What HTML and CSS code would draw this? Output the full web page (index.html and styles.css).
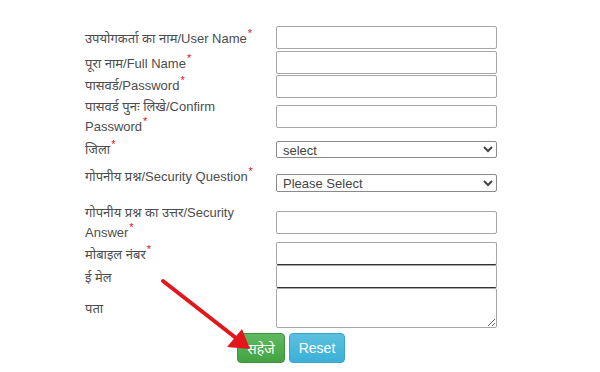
FILE: index.html
```html
<!DOCTYPE html>
<html>
<head>
<meta charset="utf-8">
<link rel="stylesheet" href="styles.css">
</head>
<body>
<div class="page">
  <form class="form">
    <div class="row r1">
      <label class="lbl">उपयोगकर्ता का नाम/User Name<span class="req">*</span></label>
      <input class="txt" type="text">
    </div>
    <div class="row r1">
      <label class="lbl">पूरा नाम/Full Name<span class="req">*</span></label>
      <input class="txt" type="text">
    </div>
    <div class="row r3">
      <label class="lbl">पासवर्ड/Password<span class="req">*</span></label>
      <input class="txt" type="password">
    </div>
    <div class="row r4">
      <label class="lbl">पासवर्ड पुनः लिखे/Confirm Password<span class="req">*</span></label>
      <input class="txt" type="password">
    </div>
    <div class="row r5">
      <label class="lbl">जिला<span class="req">*</span></label>
      <select class="sel"><option>select</option></select>
    </div>
    <div class="row r6">
      <label class="lbl top">गोपनीय प्रश्न/Security Question<span class="req">*</span></label>
      <select class="sel sel2"><option>Please Select</option></select>
    </div>
    <div class="row r7">
      <label class="lbl">गोपनीय प्रश्न का उत्तर/Security Answer<span class="req">*</span></label>
      <input class="txt" type="text">
    </div>
    <div class="row r8">
      <label class="lbl">मोबाइल नंबर<span class="req">*</span></label>
      <input class="txt dark" type="text">
    </div>
    <div class="row r8">
      <label class="lbl">ई मेल</label>
      <input class="txt dark" type="text">
    </div>
    <div class="row r10">
      <label class="lbl">पता</label>
      <textarea class="area"></textarea>
    </div>
    <div class="actions">
      <button type="button" class="btn save">सहेजे</button>
      <button type="button" class="btn reset">Reset</button>
    </div>
  </form>
  <svg class="arrow" width="600" height="372" viewBox="0 0 600 372">
    <line x1="163" y1="281" x2="236" y2="338" stroke="#e3161b" stroke-width="4" stroke-linecap="round"/>
    <polygon points="250,349 227,347 242,329" fill="#e3161b"/>
  </svg>
</div>
</body>
</html>
```
FILE: styles.css
```css
html, body {
  margin: 0;
  padding: 0;
  background: #fff;
}
.page {
  position: relative;
  width: 600px;
  height: 372px;
  overflow: hidden;
  font-family: "Liberation Sans", Arial, "Noto Sans", sans-serif;
  font-size: 13px;
  color: #4d4d4d;
}
.form {
  margin: 0;
  padding: 26px 0 0 85px;
  width: 412px;
}
.row {
  display: grid;
  grid-template-columns: 191px 221px;
  align-items: center;
}
.r1 { height: 25px; }
.r3 { height: 21px; align-items: start; }
.r4 { height: 40px; }
.r5 { height: 26px; }
.r6 { height: 40px; }
.r7 { height: 40px; }
.r8 { height: 23px; }
.r10 { height: 40px; }
.row > .txt, .row > .sel, .row > .area { position: relative; top: -1px; }
.lbl {
  line-height: 20px;
  padding-right: 8px;
}
.lbl.top {
  align-self: start;
  padding-top: 4px;
}
.req {
  display: inline-block;
  height: 8px;
  line-height: 8px;
  color: #e0101a;
  font-size: 11px;
  vertical-align: 6px;
  margin-left: 1px;
  overflow: visible;
}
.txt {
  box-sizing: border-box;
  width: 221px;
  height: 23px;
  margin: 0;
  border: 1px solid #a6a6a6;
  border-radius: 2px;
  background: #fff;
}
.txt.dark {
  border-bottom-color: #333;
}
.sel {
  box-sizing: border-box;
  width: 221px;
  height: 17px;
  margin: 0;
  padding: 0 0 0 2px;
  border: 1px solid #8a8a8a;
  border-radius: 2px;
  background: #fff;
  font-family: "Liberation Sans", Arial, sans-serif;
  font-size: 13px;
  color: #444;
}
.sel2 {
  height: 18px;
  margin-top: 2px;
}
.area {
  box-sizing: border-box;
  width: 221px;
  height: 40px;
  margin: 0;
  border: 1px solid #a6a6a6;
  border-radius: 2px;
  resize: both;
}
.actions {
  display: flex;
  justify-content: center;
  gap: 4px;
  margin-top: 4px;
}
.btn {
  height: 30px;
  border: 1px solid;
  border-radius: 4px;
  color: #fff;
  font-family: "Liberation Sans", Arial, "Noto Sans", sans-serif;
  font-size: 14px;
  padding: 0;
}
.save {
  width: 48px;
  background: linear-gradient(#5fba5f, #44a244);
  border-color: #3e8f3e;
}
.reset {
  width: 56px;
  background: linear-gradient(#5bc0de, #3cb0d8);
  border-color: #36a6cc;
}
.arrow {
  position: absolute;
  left: 0;
  top: 0;
  pointer-events: none;
}
```
